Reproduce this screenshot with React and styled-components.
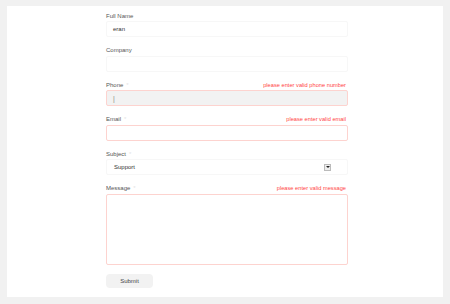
import React from "react";
import styled, { createGlobalStyle } from "styled-components";

const Global = createGlobalStyle`
  html, body { margin: 0; padding: 0; background: #f1f1f1; }
  body { font-family: "Liberation Sans", Arial, sans-serif; }
  * { box-sizing: border-box; }
`;

const Page = styled.div`
  width: 450px;
  height: 304px;
  padding: 6px 7px 7px 7px;
  background: #f1f1f1;
`;

const Panel = styled.div`
  background: #fff;
  height: 291px;
  padding: 5.5px 0 0 99px;
`;

const Form = styled.form`
  width: 242px;
  display: flex;
  flex-direction: column;
  gap: 9px;
`;

const Field = styled.div`
  display: flex;
  flex-direction: column;
  gap: 1.5px;
`;

const LabelRow = styled.div`
  height: 8px;
  display: flex;
  justify-content: space-between;
  align-items: center;
  font-size: 6px;
  line-height: 8px;
`;

const Label = styled.label`
  color: #555;
`;

const Req = styled.span`
  color: #e4e4e4;
  margin-left: 3px;
`;

const Error = styled.span`
  color: #f44;
  font-size: 5.7px;
  padding-right: 2px;
`;

const Box = styled.div`
  height: ${(p) => (p.$tall ? "71px" : "16px")};
  border: 1px solid ${(p) => (p.$error ? "#fdd3cf" : "#f7f7f7")};
  border-radius: 2px;
  background: ${(p) => (p.$gray ? "#f2f2f2" : "#fff")};
  display: flex;
  align-items: ${(p) => (p.$tall ? "flex-start" : "center")};
  padding: 0 6px;
  font-size: 6px;
  color: #333;
`;

const Caret = styled.span`
  color: #888;
  font-size: 7px;
`;

const SelectBox = styled(Box)`
  justify-content: space-between;
  padding: 0 16px 0 7px;
`;

const Arrow = styled.span`
  width: 7px;
  height: 7px;
  border: 1px solid #bbb;
  background: #eee;
  display: flex;
  align-items: center;
  justify-content: center;
  &::after {
    content: "";
    border-left: 2px solid transparent;
    border-right: 2px solid transparent;
    border-top: 2px solid #222;
  }
`;

const Button = styled.button`
  display: block;
  width: 47px;
  height: 14px;
  border: none;
  border-radius: 4px;
  background: #f2f2f2;
  color: #444;
  font-family: "Liberation Sans", Arial, sans-serif;
  font-size: 6px;
  padding: 0;
`;

export default function App() {
  return (
    <>
      <Global />
      <Page>
        <Panel>
          <Form onSubmit={(e) => e.preventDefault()}>
            <Field>
              <LabelRow><Label>Full Name</Label></LabelRow>
              <Box>eran</Box>
            </Field>
            <Field>
              <LabelRow><Label>Company</Label></LabelRow>
              <Box />
            </Field>
            <Field>
              <LabelRow>
                <Label>Phone<Req>*</Req></Label>
                <Error>please enter valid phone number</Error>
              </LabelRow>
              <Box $error $gray><Caret>|</Caret></Box>
            </Field>
            <Field>
              <LabelRow>
                <Label>Email<Req>*</Req></Label>
                <Error>please enter valid email</Error>
              </LabelRow>
              <Box $error />
            </Field>
            <Field>
              <LabelRow><Label>Subject<Req>*</Req></Label></LabelRow>
              <SelectBox>
                <span>Support</span>
                <Arrow />
              </SelectBox>
            </Field>
            <Field>
              <LabelRow>
                <Label>Message<Req>*</Req></Label>
                <Error>please enter valid message</Error>
              </LabelRow>
              <Box $error $tall />
            </Field>
            <div>
              <Button type="submit">Submit</Button>
            </div>
          </Form>
        </Panel>
      </Page>
    </>
  );
}
